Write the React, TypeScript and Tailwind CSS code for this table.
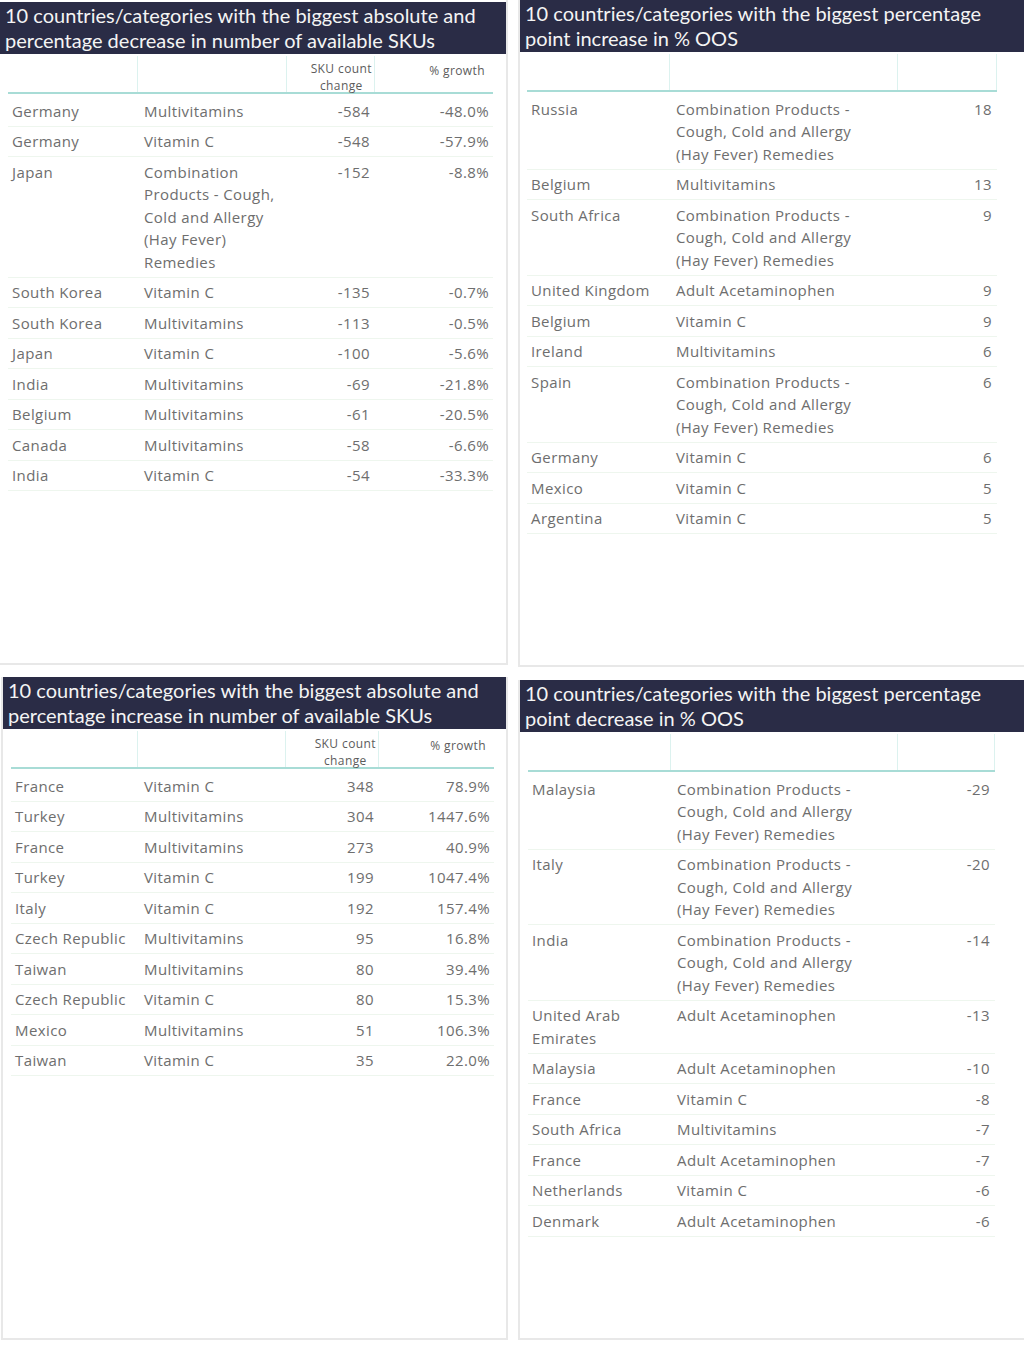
import React from "react";

type Row = { country: string[]; cat: string[]; a: string; b?: string };

const T1: Row[] = [
  { country: ["Germany"], cat: ["Multivitamins"], a: "-584", b: "-48.0%" },
  { country: ["Germany"], cat: ["Vitamin C"], a: "-548", b: "-57.9%" },
  { country: ["Japan"], cat: ["Combination", "Products - Cough,", "Cold and Allergy", "(Hay Fever)", "Remedies"], a: "-152", b: "-8.8%" },
  { country: ["South Korea"], cat: ["Vitamin C"], a: "-135", b: "-0.7%" },
  { country: ["South Korea"], cat: ["Multivitamins"], a: "-113", b: "-0.5%" },
  { country: ["Japan"], cat: ["Vitamin C"], a: "-100", b: "-5.6%" },
  { country: ["India"], cat: ["Multivitamins"], a: "-69", b: "-21.8%" },
  { country: ["Belgium"], cat: ["Multivitamins"], a: "-61", b: "-20.5%" },
  { country: ["Canada"], cat: ["Multivitamins"], a: "-58", b: "-6.6%" },
  { country: ["India"], cat: ["Vitamin C"], a: "-54", b: "-33.3%" },
];

const COMBO = ["Combination Products -", "Cough, Cold and Allergy", "(Hay Fever) Remedies"];

const T2: Row[] = [
  { country: ["Russia"], cat: COMBO, a: "18" },
  { country: ["Belgium"], cat: ["Multivitamins"], a: "13" },
  { country: ["South Africa"], cat: COMBO, a: "9" },
  { country: ["United Kingdom"], cat: ["Adult Acetaminophen"], a: "9" },
  { country: ["Belgium"], cat: ["Vitamin C"], a: "9" },
  { country: ["Ireland"], cat: ["Multivitamins"], a: "6" },
  { country: ["Spain"], cat: COMBO, a: "6" },
  { country: ["Germany"], cat: ["Vitamin C"], a: "6" },
  { country: ["Mexico"], cat: ["Vitamin C"], a: "5" },
  { country: ["Argentina"], cat: ["Vitamin C"], a: "5" },
];

const T3: Row[] = [
  { country: ["France"], cat: ["Vitamin C"], a: "348", b: "78.9%" },
  { country: ["Turkey"], cat: ["Multivitamins"], a: "304", b: "1447.6%" },
  { country: ["France"], cat: ["Multivitamins"], a: "273", b: "40.9%" },
  { country: ["Turkey"], cat: ["Vitamin C"], a: "199", b: "1047.4%" },
  { country: ["Italy"], cat: ["Vitamin C"], a: "192", b: "157.4%" },
  { country: ["Czech Republic"], cat: ["Multivitamins"], a: "95", b: "16.8%" },
  { country: ["Taiwan"], cat: ["Multivitamins"], a: "80", b: "39.4%" },
  { country: ["Czech Republic"], cat: ["Vitamin C"], a: "80", b: "15.3%" },
  { country: ["Mexico"], cat: ["Multivitamins"], a: "51", b: "106.3%" },
  { country: ["Taiwan"], cat: ["Vitamin C"], a: "35", b: "22.0%" },
];

const T4: Row[] = [
  { country: ["Malaysia"], cat: COMBO, a: "-29" },
  { country: ["Italy"], cat: COMBO, a: "-20" },
  { country: ["India"], cat: COMBO, a: "-14" },
  { country: ["United Arab", "Emirates"], cat: ["Adult Acetaminophen"], a: "-13" },
  { country: ["Malaysia"], cat: ["Adult Acetaminophen"], a: "-10" },
  { country: ["France"], cat: ["Vitamin C"], a: "-8" },
  { country: ["South Africa"], cat: ["Multivitamins"], a: "-7" },
  { country: ["France"], cat: ["Adult Acetaminophen"], a: "-7" },
  { country: ["Netherlands"], cat: ["Vitamin C"], a: "-6" },
  { country: ["Denmark"], cat: ["Adult Acetaminophen"], a: "-6" },
];

function Lines({ l }: { l: string[] }) {
  return (
    <>
      {l.map((s, i) => (
        <div key={i} className="whitespace-nowrap">
          {s}
        </div>
      ))}
    </>
  );
}

function Table({
  rows,
  cols,
  twoVals,
}: {
  rows: Row[];
  cols: number[];
  twoVals: boolean;
}) {
  return (
    <div className="font-['Open_Sans',sans-serif]" style={{ width: cols.reduce((x, y) => x + y, 0) }}>
      <div className="flex h-[38px] border-b-2 border-[#a8dcd6]">
        <div className="border-r border-[#dcf2ef]" style={{ width: cols[0] }} />
        <div className="border-r border-[#dcf2ef]" style={{ width: cols[1] }} />
        {twoVals ? (
          <>
            <div className="flex justify-end border-r border-[#dcf2ef] pr-[2px] pt-[4px]" style={{ width: cols[2] }}>
              <div className="text-center text-[12px] leading-[17px] tracking-[0.4px] text-[#5c5c5c]">
                SKU count
                <br />
                change
              </div>
            </div>
            <div className="flex justify-end pr-[8px] pt-[6px]" style={{ width: cols[3] }}>
              <div className="text-[12px] leading-[17px] tracking-[0.4px] text-[#5c5c5c]">% growth</div>
            </div>
          </>
        ) : (
          <div className="border-r border-[#dcf2ef]" style={{ width: cols[2] }} />
        )}
      </div>
      <div className="pt-[2px] text-[15px] leading-[22.5px] tracking-[0.4px] text-[#6e6e6e]">
        {rows.map((r, i) => (
          <div key={i} className="flex border-b border-[#eef6ee] py-[3.5px]">
            <div className="pl-[4px]" style={{ width: cols[0] }}>
              <Lines l={r.country} />
            </div>
            <div className="pl-[6px]" style={{ width: cols[1] }}>
              <Lines l={r.cat} />
            </div>
            <div className="pr-[5px] text-right" style={{ width: cols[2] }}>
              {r.a}
            </div>
            {twoVals && (
              <div className="pr-[4px] text-right" style={{ width: cols[3] }}>
                {r.b}
              </div>
            )}
          </div>
        ))}
      </div>
    </div>
  );
}

function Header({ l1, l2 }: { l1: string; l2: string }) {
  return (
    <div className="h-[52px] bg-[#2a2c46] pl-[5px] pt-[1px] font-['Lato',sans-serif] text-[20px] leading-[25px] text-[#f4f4f4]">
      <div className="whitespace-nowrap">{l1}</div>
      <div className="whitespace-nowrap">{l2}</div>
    </div>
  );
}

export default function App() {
  return (
    <div className="h-[1350px] w-[1024px] overflow-hidden bg-white">
      <div className="flex gap-[10px]">
        <div className="flex h-[665px] w-[508px] flex-col border-b-2 border-r-2 border-[#e8e8e8]">
          <div className="mt-[2px]">
            <Header
              l1="10 countries/categories with the biggest absolute and"
              l2="percentage decrease in number of available SKUs"
            />
          </div>
          <div className="pl-[8px] pt-[2px]">
            <Table rows={T1} cols={[130, 149, 88, 118]} twoVals />
          </div>
        </div>
        <div className="flex h-[667px] flex-1 flex-col border-b-2 border-l-2 border-[#e8e8e8]">
          <Header
            l1="10 countries/categories with the biggest percentage"
            l2="point increase in % OOS"
          />
          <div className="pl-[7px] pt-[2px]">
            <Table rows={T2} cols={[143, 228, 99]} twoVals={false} />
          </div>
        </div>
      </div>
      <div className="mt-[10px] flex gap-[10px]">
        <div className="ml-[1px] flex h-[663px] w-[507px] flex-col border-b-2 border-l-2 border-r-2 border-[#e8e8e8]">
          <Header
            l1="10 countries/categories with the biggest absolute and"
            l2="percentage increase in number of available SKUs"
          />
          <div className="pl-[8px] pt-[2px]">
            <Table rows={T3} cols={[127, 148, 93, 115]} twoVals />
          </div>
        </div>
        <div className="mt-[3px] flex h-[660px] flex-1 flex-col border-b-2 border-l-2 border-[#e8e8e8]">
          <Header
            l1="10 countries/categories with the biggest percentage"
            l2="point decrease in % OOS"
          />
          <div className="pl-[8px] pt-[2px]">
            <Table rows={T4} cols={[143, 227, 97]} twoVals={false} />
          </div>
        </div>
      </div>
    </div>
  );
}
